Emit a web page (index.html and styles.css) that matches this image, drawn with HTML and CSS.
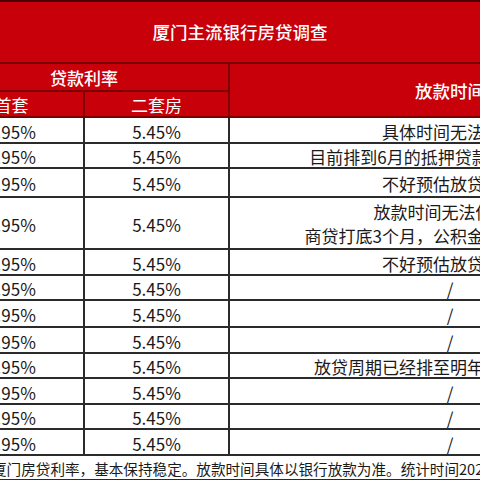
FILE: index.html
```html
<!DOCTYPE html>
<html lang="zh-CN">
<head>
<meta charset="utf-8">
<title>厦门主流银行房贷调查</title>
<link rel="stylesheet" href="styles.css">
</head>
<body>
<div class="sheet">
  <div class="title">厦门主流银行房贷调查</div>
  <table class="grid">
    <colgroup><col class="c1"><col class="c2"><col class="c3"></colgroup>
    <thead>
      <tr class="h1"><th colspan="2">贷款利率</th><th rowspan="2" class="ht">放款时间</th></tr>
      <tr class="h2"><th>首套</th><th>二套房</th></tr>
    </thead>
    <tbody>
      <tr class="r26"><td>4.95%</td><td>5.45%</td><td>具体时间无法确定</td></tr>
      <tr class="r25"><td>4.95%</td><td>5.45%</td><td>目前排到6月的抵押贷款，仍在排队中</td></tr>
      <tr class="r29"><td>4.95%</td><td>5.45%</td><td>不好预估放贷时间</td></tr>
      <tr class="r52"><td>4.95%</td><td>5.45%</td><td class="two">放款时间无法估计，<br>商贷打底3个月，公积金贷款打底6个月</td></tr>
      <tr class="r26"><td>4.95%</td><td>5.45%</td><td>不好预估放贷时间</td></tr>
      <tr class="r25"><td>4.95%</td><td>5.45%</td><td>/</td></tr>
      <tr class="r27"><td>4.95%</td><td>5.45%</td><td>/</td></tr>
      <tr class="r26"><td>4.95%</td><td>5.45%</td><td>/</td></tr>
      <tr class="r25"><td>4.95%</td><td>5.45%</td><td>放贷周期已经排至明年，具体等通知</td></tr>
      <tr class="r26"><td>4.95%</td><td>5.45%</td><td>/</td></tr>
      <tr class="r25"><td>4.95%</td><td>5.45%</td><td>/</td></tr>
      <tr class="r26"><td>4.95%</td><td>5.45%</td><td>/</td></tr>
    </tbody>
    <tfoot>
      <tr class="r25"><td colspan="3" class="note">厦门房贷利率，基本保持稳定。放款时间具体以银行放款为准。统计时间2022年5月</td></tr>
    </tfoot>
  </table>
</div>
</body>
</html>
```
FILE: styles.css
```css
* { box-sizing: border-box; }
html, body { margin: 0; padding: 0; }
body {
  width: 480px;
  height: 480px;
  overflow: hidden;
  background: #fff;
  font-family: "Noto Sans CJK SC", "Noto Sans", sans-serif;
}
.sheet { width: 480px; overflow: hidden; }
.title {
  height: 64px;
  background: #c8000a;
  border-top: 2px solid #4a0000;
  border-bottom: 2px solid #7a0000;
  color: #fff;
  font-size: 17.5px;
  font-weight: 500;
  display: flex;
  align-items: center;
  justify-content: center;
  padding-bottom: 1px;
}
.grid {
  border-collapse: collapse;
  table-layout: fixed;
  width: 732px;
  margin-left: -62px;
}
.c1, .c2 { width: 145px; }
.c3 { width: 442px; }
th {
  background: #c8000a;
  color: #fff;
  font-weight: 400;
  font-size: 17px;
  border: 2px solid #7a0000;
  border-top: 0;
  padding: 0;
  line-height: 23px;
}
.h1 th { height: 27px; font-weight: 500; }
.h2 th { height: 26px; }
.ht { font-size: 17.5px; font-weight: 500; }
td {
  border: 2px solid #2b2b2b;
  text-align: center;
  font-size: 17px;
  padding: 2px 0 0;
  line-height: 21px;
  color: #1a1a1a;
}
.two { line-height: 24px; padding-top: 1px; }
.r25 td { height: 25px; }
.r26 td { height: 26px; }
.r27 td { height: 27px; }
.r29 td { height: 29px; }
.r52 td { height: 52px; }
.note {
  text-align: left;
  padding-left: 52px;
  font-size: 14.6px;
  white-space: nowrap;
}
```
